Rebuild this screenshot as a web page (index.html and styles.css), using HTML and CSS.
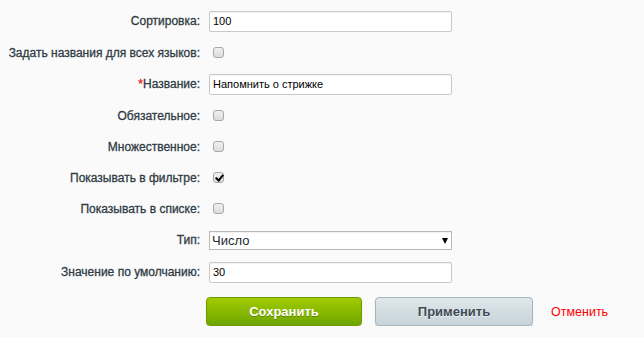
FILE: index.html
```html
<!doctype html>
<html lang="ru">

<head>
    <meta charset="UTF-8" />
    <meta name="viewport" content="width=device-width, initial-scale=1.0" />
    <title>Свойство</title>
    <link rel="stylesheet" href="styles.css">
</head>

<body>
    <form class="prop-form">
        <div class="form-row row-text">
            <label class="form-label" for="sort">Сортировка:</label>
            <div class="form-field"><input type="text" id="sort" class="form-input" value="100" /></div>
        </div>

        <div class="form-row">
            <label class="form-label" for="all-langs">Задать названия для всех языков:</label>
            <div class="form-field"><input type="checkbox" id="all-langs" class="form-check" /></div>
        </div>

        <div class="form-row row-text">
            <label class="form-label" for="name"><span class="required">*</span>Название:</label>
            <div class="form-field"><input type="text" id="name" class="form-input" value="Напомнить о стрижке" /></div>
        </div>

        <div class="form-row">
            <label class="form-label" for="is-required">Обязательное:</label>
            <div class="form-field"><input type="checkbox" id="is-required" class="form-check" /></div>
        </div>

        <div class="form-row">
            <label class="form-label" for="multiple">Множественное:</label>
            <div class="form-field"><input type="checkbox" id="multiple" class="form-check" /></div>
        </div>

        <div class="form-row">
            <label class="form-label" for="in-filter">Показывать в фильтре:</label>
            <div class="form-field"><input type="checkbox" id="in-filter" class="form-check" checked /></div>
        </div>

        <div class="form-row">
            <label class="form-label" for="in-list">Показывать в списке:</label>
            <div class="form-field"><input type="checkbox" id="in-list" class="form-check" /></div>
        </div>

        <div class="form-row row-text">
            <label class="form-label" for="type">Тип:</label>
            <div class="form-field select-wrap">
                <select id="type" class="form-input form-select">
                    <option>Число</option>
                    <option>Строка</option>
                    <option>Список</option>
                </select>
            </div>
        </div>

        <div class="form-row row-text">
            <label class="form-label" for="default">Значение по умолчанию:</label>
            <div class="form-field"><input type="text" id="default" class="form-input" value="30" /></div>
        </div>

        <!-- Buttons -->
        <div class="form-buttons">
            <button type="submit" class="btn btn-save">Сохранить</button>
            <button type="button" class="btn btn-apply">Применить</button>
            <a href="#" class="cancel-link">Отменить</a>
        </div>
    </form>
</body>

</html>
```

FILE: styles.css
```css
body {
    margin: 0;
    background: #fafafa;
    font-family: "Liberation Sans", Arial, sans-serif;
    font-size: 13px;
    color: #000;
}

.prop-form {
    padding-top: 5px;
}

.form-row {
    display: grid;
    grid-template-columns: 200px 243px;
    column-gap: 9px;
    align-items: center;
    height: 31px;
}

.form-row.row-text {
    height: 32px;
}

.form-label {
    text-align: right;
    white-space: nowrap;
    color: #2f3b44;
    font-size: 12px;
    -webkit-text-stroke: 0.3px #2f3b44;
    text-shadow: 0 1px #fff;
}

.required {
    color: #e02222;
    -webkit-text-stroke: 0.3px #e02222;
}

.form-field {
    display: flex;
    align-items: center;
}

.form-input {
    width: 100%;
    height: 21px;
    box-sizing: border-box;
    margin: 0;
    padding: 0 3px;
    border: 1px solid #c9c9c9;
    border-radius: 2px;
    box-shadow: inset 0 1px 1px rgba(0, 0, 0, 0.06);
    background: #fff;
    font-family: "Liberation Sans", Arial, sans-serif;
    font-size: 11px;
    color: #000;
}

.form-input:focus {
    outline: none;
    border-color: #8fa9c4;
}

.select-wrap {
    position: relative;
}

.form-select {
    appearance: none;
    -webkit-appearance: none;
    height: 19px;
    padding: 0 2px;
    border-color: #b9b9b9;
    border-radius: 0;
    font-size: 13px;
    color: #1e2a33;
}

.select-wrap::after {
    content: "";
    position: absolute;
    right: 4px;
    top: 7px;
    border-left: 3.5px solid transparent;
    border-right: 3.5px solid transparent;
    border-top: 6px solid #000;
    pointer-events: none;
}

.form-check {
    appearance: none;
    -webkit-appearance: none;
    position: relative;
    width: 11px;
    height: 11px;
    margin: 0 0 0 4px;
    border: 1px solid #a8a8a8;
    border-radius: 3px;
    background: linear-gradient(#f0f0f0, #dcdcdc);
    cursor: pointer;
}

.form-check:checked::after {
    content: "";
    position: absolute;
    left: 3px;
    top: 0px;
    width: 3px;
    height: 6px;
    border-right: 2px solid #000;
    border-bottom: 2px solid #000;
    transform: rotate(40deg);
}

.form-buttons {
    display: flex;
    align-items: center;
    padding-left: 206px;
    margin-top: 9px;
}

.btn {
    height: 29px;
    box-sizing: border-box;
    border-radius: 4px;
    font-family: "Liberation Sans", Arial, sans-serif;
    font-size: 13px;
    font-weight: bold;
    cursor: pointer;
}

.btn-save {
    width: 156px;
    margin-right: 13px;
    color: #fff;
    border: 1px solid #6f9b00;
    background: linear-gradient(#a2cb00, #6ea600);
    text-shadow: 0 1px rgba(0, 0, 0, 0.25);
    box-shadow: 0 1px 1px rgba(0, 0, 0, 0.2);
}

.btn-apply {
    width: 158px;
    margin-right: 18px;
    color: #3f4b54;
    border: 1px solid #a8b3b8;
    background: linear-gradient(#dfe7ea, #c7d4d9);
    text-shadow: 0 1px rgba(255, 255, 255, 0.6);
    box-shadow: 0 1px 1px rgba(0, 0, 0, 0.2);
}

.cancel-link {
    color: #f00;
    text-decoration: none;
    font-size: 12.5px;
}

.cancel-link:hover {
    text-decoration: underline;
}
```
